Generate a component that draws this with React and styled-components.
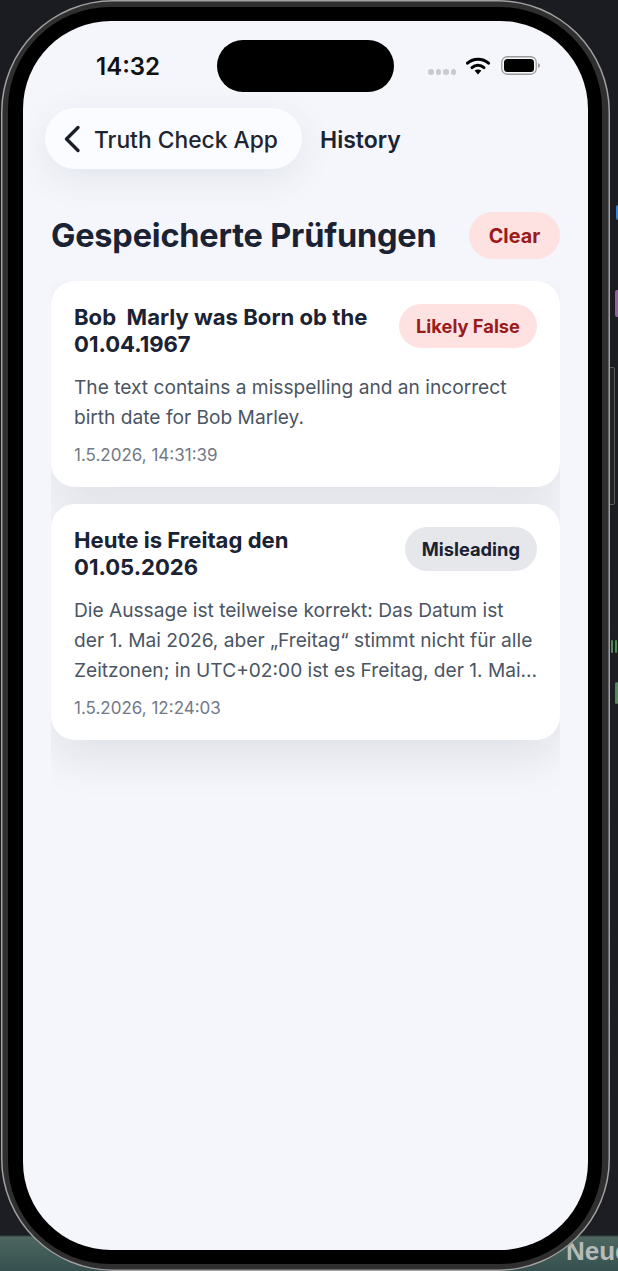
import React from "react";
import styled, { createGlobalStyle } from "styled-components";

const Global = createGlobalStyle`
  html, body { margin: 0; padding: 0; width: 618px; height: 1271px; overflow: hidden; background: #1b1c21; }
  * { box-sizing: border-box; }
  #root { width: 618px; height: 1271px; overflow: hidden; }
`;

const Desk = styled.div`
  position: relative;
  width: 618px;
  height: 1271px;
  overflow: hidden;
  background: linear-gradient(to bottom, #1b1c21 0, #1d1e23 1235px, #4d6660 1237px, #35504f 1271px);
`;

const DeskLabel = styled.div`
  position: absolute;
  left: 566px;
  top: 1237px;
  font-family: "Liberation Sans", Arial, sans-serif;
  font-size: 26px;
  line-height: 28px;
  font-weight: 700;
  white-space: nowrap;
  color: #b6bbb8;
`;

const DeskMark = styled.div`
  position: absolute;
  left: ${p => p.$x}px;
  top: ${p => p.$y}px;
  width: ${p => p.$w}px;
  height: ${p => p.$h}px;
  border-radius: 2px;
  background: ${p => p.$color};
`;

const SideButton = styled.div`
  position: absolute;
  left: 609px;
  top: 367px;
  width: 6px;
  height: 138px;
  background: #232326;
  border: 1.500px solid #5a5a5c;
  border-left: none;
  border-radius: 0 2px 2px 0;
`;

const Shell = styled.div`
  position: relative;
  z-index: 1;
  width: 609px;
  height: 1271px;
  margin-left: 1px;
  background: #2f2f30;
  border-radius: 112px;
  box-shadow: inset 0 0 0 1.500px #a0a0a0;
  padding: 7px 8px 7px 7px;
`;

const Bezel = styled.div`
  width: 594px;
  height: 1257px;
  background: #000;
  border-radius: 102px;
  padding: 14px 14px 14px 15px;
`;

const Screen = styled.div`
  position: relative;
  width: 565px;
  height: 1229px;
  background: #f4f6fb;
  border-radius: 88px;
  overflow: hidden;
  font-family: Inter, "Liberation Sans", sans-serif;
  color: #111827;
`;

const Island = styled.div`
  position: absolute;
  left: 194px;
  top: 19px;
  width: 177px;
  height: 52px;
  background: #000;
  border-radius: 26px;
`;

const StatusBar = styled.div`
  height: 87px;
  padding: 31px 48px 0 73px;
  display: flex;
  justify-content: space-between;
  align-items: flex-start;
`;

const Time = styled.div`
  font-size: 24px;
  line-height: 29px;
  font-weight: 600;
  color: #111;
`;

const StatusIcons = styled.div`
  display: flex;
  align-items: center;
  gap: 11px;
  padding-top: 4px;
`;

const Dots = styled.div`
  display: flex;
  gap: 2px;
  margin-top: 13px;
  margin-right: -1px;
`;

const Dot = styled.span`
  width: 5.500px;
  height: 5.500px;
  border-radius: 50%;
  background: #c9cacd;
`;

const NavBar = styled.div`
  display: flex;
  align-items: center;
  gap: 18px;
  padding-left: 22px;
`;

const BackPill = styled.div`
  width: 257px;
  height: 61px;
  border-radius: 31px;
  background: #fbfcff;
  box-shadow: 0 10px 36px rgba(60, 70, 90, 0.09);
  display: flex;
  align-items: center;
  padding-left: 17px;
  gap: 12px;
`;

const BackLabel = styled.span`
  font-size: 22.800px;
  line-height: 28px;
  margin-top: 2px;
  font-weight: 500;
  color: #1f2530;
`;

const NavTitle = styled.span`
  font-size: 23px;
  line-height: 28px;
  margin-top: 2px;
  font-weight: 600;
  color: #1b2333;
`;

const Content = styled.div`
  padding: 43px 28px 0;
`;

const HeaderRow = styled.div`
  display: flex;
  justify-content: space-between;
  align-items: center;
  margin-bottom: 22px;
`;

const Heading = styled.h1`
  margin: 0;
  font-size: 32.500px;
  line-height: 47px;
  font-weight: 700;
  letter-spacing: -0.2px;
  color: #1a2233;
`;

const ClearButton = styled.div`
  width: 91px;
  height: 47px;
  border-radius: 24px;
  background: #fee2e2;
  color: #991b1b;
  font-size: 19.800px;
  font-weight: 700;
  display: flex;
  align-items: center;
  justify-content: center;
`;

const List = styled.div`
  display: flex;
  flex-direction: column;
  gap: 17px;
  overflow: hidden;
  padding-bottom: 68px;
`;

const Card = styled.div`
  background: #fff;
  border-radius: 24px;
  padding: 23px 23px 20px;
  box-shadow: 0 18px 46px rgba(17, 24, 39, 0.09);
`;

const CardTop = styled.div`
  display: flex;
  justify-content: space-between;
  align-items: flex-start;
  gap: 16px;
  margin-bottom: 14px;
`;

const CardTitle = styled.div`
  width: 300px;
  font-size: 22.100px;
  line-height: 27px;
  font-weight: 700;
  color: #1a2233;
  white-space: pre-wrap;
`;

const Badge = styled.div`
  flex: none;
  height: 44px;
  padding: 0 17px;
  border-radius: 22px;
  font-size: 18.300px;
  font-weight: 700;
  display: flex;
  align-items: center;
  background: ${p => (p.$tone === "red" ? "#fee2e2" : "#e5e7eb")};
  color: ${p => (p.$tone === "red" ? "#991b1b" : "#1a2233")};
`;

const Desc = styled.div`
  font-size: 19.150px;
  line-height: 30px;
  color: #4b5563;
  margin-right: -6px;
  margin-bottom: 11px;
  white-space: pre-line;
  display: -webkit-box;
  -webkit-box-orient: vertical;
  -webkit-line-clamp: 3;
  overflow: hidden;
`;

const Stamp = styled.div`
  font-size: 17px;
  line-height: 24px;
  color: #727987;
`;

const Wifi = () => (
  <svg width="24" height="18" viewBox="0 0 24 18" style={{ display: "block" }}>
    <path d="M1.5 6.2C7.4 .8 16.6 .8 22.5 6.2" fill="none" stroke="#000" strokeWidth="3" strokeLinecap="round" />
    <path d="M6 10.6c3.4-3 8.6-3 12 0" fill="none" stroke="#000" strokeWidth="3" strokeLinecap="round" />
    <path d="M8.6 13.6c2-1.5 4.8-1.500 6.800 0L12 17.400z" fill="#000" />
  </svg>
);

const Battery = () => (
  <svg width="39" height="19" viewBox="0 0 39 19" style={{ display: "block" }}>
    <rect x="0.75" y="0.75" width="34.5" height="17.5" rx="5.5" fill="none" stroke="#9b9b9b" strokeWidth="1.3" />
    <rect x="3" y="3" width="30" height="13" rx="3.5" fill="#000" />
    <path d="M37 7v5c1.2-.5 2-1.4 2-2.5S38.200 7.500 37 7z" fill="#9b9b9b" />
  </svg>
);

const Chevron = () => (
  <svg width="20" height="30" viewBox="0 0 20 30" style={{ display: "block" }}>
    <path d="M16 3.500L4.500 15 16 26.500" fill="none" stroke="#1a1f28" strokeWidth="3.400" strokeLinecap="round" strokeLinejoin="round" />
  </svg>
);

const entries = [
  {
    title: "Bob  Marly was Born ob the 01.04.1967",
    badge: "Likely False",
    tone: "red",
    desc: "The text contains a misspelling and an incorrect\nbirth date for Bob Marley.",
    stamp: "1.5.2026, 14:31:39",
  },
  {
    title: "Heute is Freitag den 01.05.2026",
    badge: "Misleading",
    tone: "gray",
    desc: "Die Aussage ist teilweise korrekt: Das Datum ist\nder 1. Mai 2026, aber „Freitag“ stimmt nicht für alle\nZeitzonen; in UTC+02:00 ist es Freitag, der 1. Mai 2026, in anderen Zeitzonen kann es abweichen.",
    stamp: "1.5.2026, 12:24:03",
  },
];

const marks = [
  { x: 616, y: 205, w: 4, h: 15, color: "#3b82c8" },
  { x: 615, y: 290, w: 5, h: 27, color: "#8f5f9f" },
  { x: 611, y: 640, w: 2, h: 13, color: "#4f8a55" },
  { x: 615, y: 640, w: 2, h: 13, color: "#4f8a55" },
  { x: 615, y: 682, w: 3, h: 22, color: "#4f8a55" },
];

export default function App() {
  return (
    <Desk>
      <Global />
      {marks.map(m => (
        <DeskMark key={m.y + "-" + m.x} $x={m.x} $y={m.y} $w={m.w} $h={m.h} $color={m.color} />
      ))}
      <SideButton />
      <DeskLabel>Neue</DeskLabel>
      <Shell>
        <Bezel>
          <Screen>
            <Island />
            <StatusBar>
              <Time>14:32</Time>
              <StatusIcons>
                <Dots>
                  <Dot /><Dot /><Dot /><Dot />
                </Dots>
                <Wifi />
                <Battery />
              </StatusIcons>
            </StatusBar>
            <NavBar>
              <BackPill>
                <Chevron />
                <BackLabel>Truth Check App</BackLabel>
              </BackPill>
              <NavTitle>History</NavTitle>
            </NavBar>
            <Content>
              <HeaderRow>
                <Heading>Gespeicherte Prüfungen</Heading>
                <ClearButton>Clear</ClearButton>
              </HeaderRow>
              <List>
                {entries.map(e => (
                  <Card key={e.stamp}>
                    <CardTop>
                      <CardTitle>{e.title}</CardTitle>
                      <Badge $tone={e.tone}>{e.badge}</Badge>
                    </CardTop>
                    <Desc>{e.desc}</Desc>
                    <Stamp>{e.stamp}</Stamp>
                  </Card>
                ))}
              </List>
            </Content>
          </Screen>
        </Bezel>
      </Shell>
    </Desk>
  );
}
